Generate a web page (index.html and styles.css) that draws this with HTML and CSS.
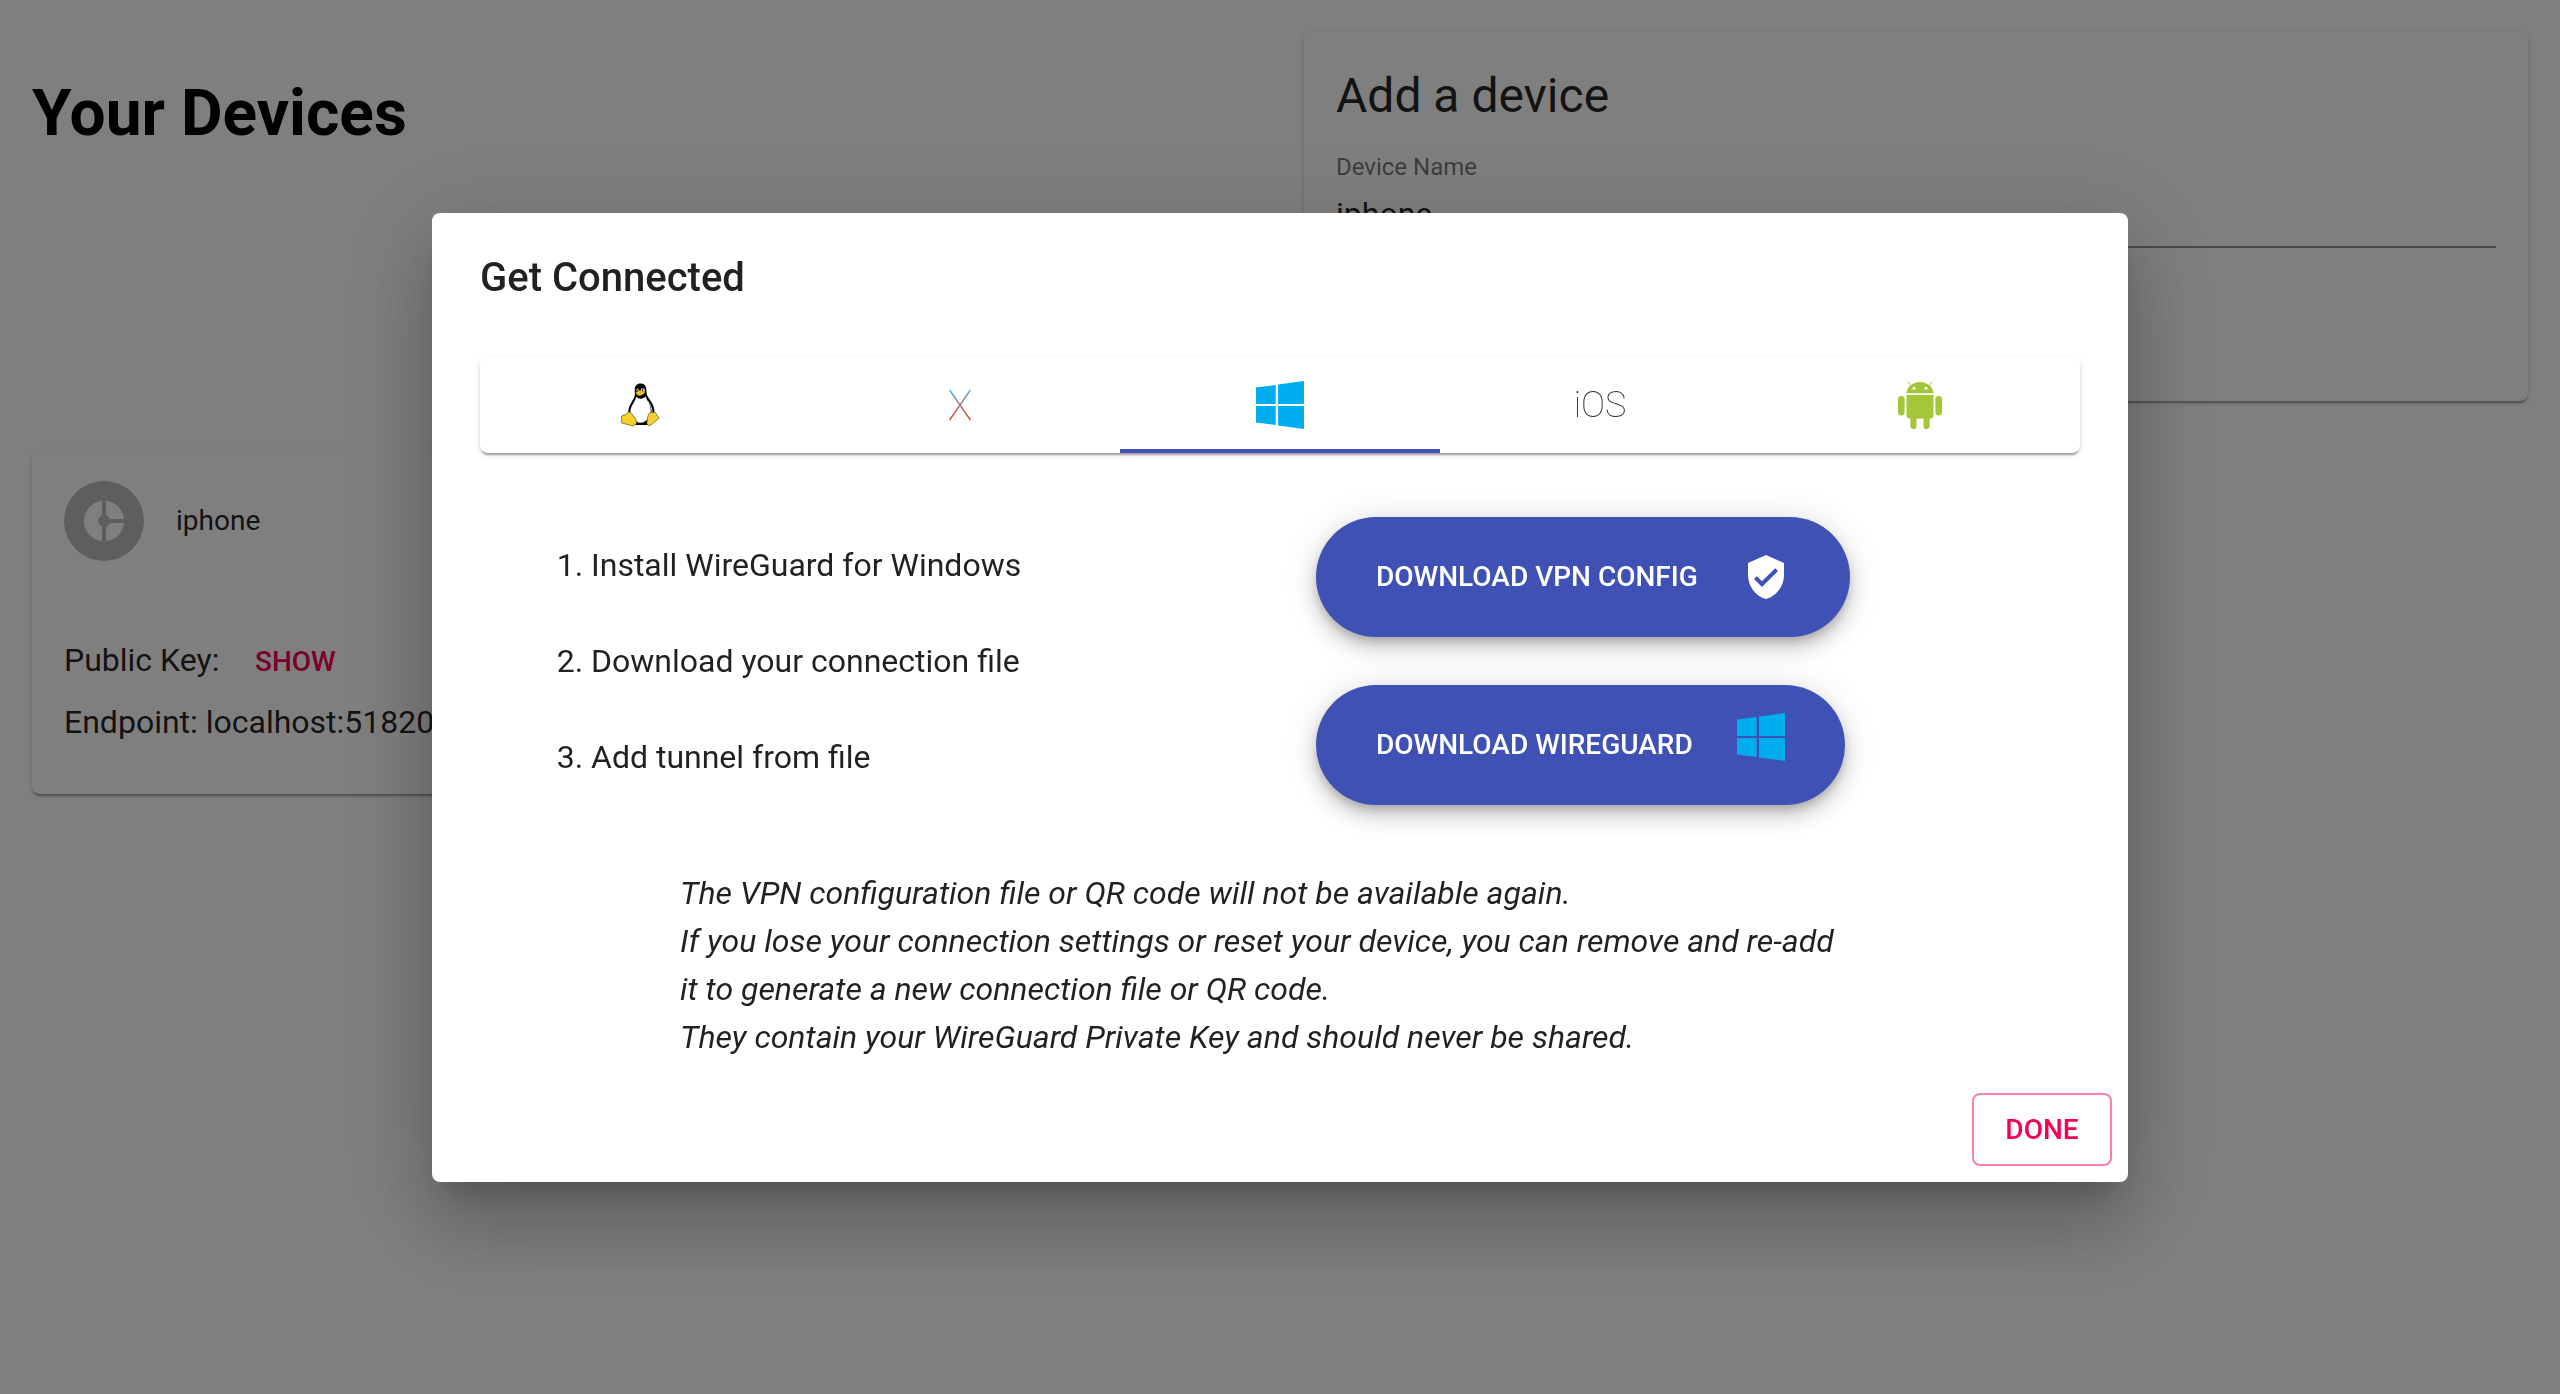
FILE: index.html
```html
<!DOCTYPE html>
<html lang="en">
<head>
  <meta charset="utf-8">
  <title>Your Devices</title>
  <link rel="stylesheet" href="styles.css">
</head>
<body>
  <svg class="sprite" aria-hidden="true">
    <symbol id="windows" viewBox="0 0 48 48">
      <path fill="#00adef" d="M0 6.6 19.7 4v19H0zM22 3.6 48 0v23H22zM0 25h19.7v19L0 41.400zM22 25h26v23l-26-3.600z"/>
    </symbol>
  </svg>

  <main class="page">
    <section class="devices">
      <h1 class="devices-title">Your Devices</h1>
      <article class="card device">
        <header class="device-header">
          <span class="avatar">
            <svg width="48" height="48" viewBox="0 0 24 24" fill="#fff" aria-hidden="true"><path d="M11 9.160V2c-5 .5-9 4.790-9 10s4 9.500 9 10v-7.160c-1-.410-2-1.520-2-2.840s1-2.430 2-2.840zM14.860 11H22c-.480-4.750-4-8.530-9-9v7.160c1 .300 1.520.980 1.860 1.840zM13 14.840V22c5-.470 8.520-4.250 9-9h-7.140c-.340.860-.860 1.540-1.860 1.840z"/></svg>
          </span>
          <span class="device-name">iphone</span>
        </header>
        <div class="device-body">
          <p class="key-row">Public Key: <button type="button" class="text-button">SHOW</button></p>
          <p class="line">Endpoint: localhost:51820</p>
        </div>
      </article>
    </section>

    <section>
      <form class="card add-form">
        <h2 class="add-title">Add a device</h2>
        <div class="field">
          <label for="device-name">Device Name</label>
          <input id="device-name" type="text" value="iphone">
        </div>
      </form>
    </section>
  </main>

  <div class="backdrop">
    <div class="dialog" role="dialog" aria-modal="true" aria-labelledby="dialog-title">
      <h2 class="dialog-title" id="dialog-title">Get Connected</h2>
      <div class="dialog-content">
        <div class="tabs" role="tablist">
          <button type="button" class="tab" role="tab" aria-label="Linux">
            <svg width="48" height="48" viewBox="0 0 48 48" aria-hidden="true">
              <path d="M24.500 2.500c-3.700 0-5.800 2.500-5.700 6.300.1 3.600.4 6-1 8.500-1.600 2.900-4.300 6.600-5.200 10.700-.5 2.600.2 4-.8 6.500L18 44h17l4-8c-1.500-2.500 0-5-1-9-1.100-4.600-3.600-7.500-5.700-10.500-1.900-2.700-1.800-5.200-2-8.200-.3-3.700-2.200-5.800-5.800-5.800z"/>
              <path fill="#fff" d="M20.300 15.500c1.500 1.600 3 2.300 4.500 2.200 1.800-.1 3.500-1.300 4.900-2.500.6 3 4.300 8 5 13 .4 3-.4 5-1.700 7.300-.7 2.500-3.700 6-8.200 6.200-4 .2-6-2.200-7.500-4.500-1.900-2.700-3.300-5-2.900-8 .6-4 4.400-8 5.900-13.700z"/>
              <path fill="none" stroke="#fff" stroke-width=".8" d="M32 20c2 4 4.500 7 4 12"/>
              <path fill="#fff" d="M20.300 9.500c0-1.300.5-2 1.400-2 1 0 1.600.9 1.600 2.300zM24.800 9.700c0-1.600.8-2.500 2.100-2.500s2 .9 2 2.400l-.5 1.500z"/>
              <circle cx="22" cy="9" r=".8"/><circle cx="26.700" cy="8.900" r=".8"/>
              <path fill="#f2c21d" stroke="#604b10" stroke-width=".4" d="M20 11.300c1.500-1.100 2.700-2.100 4-2.100s3 1.200 4.700 1.900c.5.800-.2 1.500-1.100 2-1.300.8-2.300 1.700-3.900 1.700-1.700 0-3-1.500-3.700-2.300-.4-.4-.3-.8 0-1.200z"/>
              <path fill="#f6d12b" stroke="#3f3208" stroke-width=".6" d="M12.300 31c1.700-.5 3 .8 4.300 2.800 1.400 2.200 3.600 4.500 3.900 7 .3 2.800-1.800 4.500-5 3.800-3-.7-5.500-1.700-9.300-2.300-1.200-.5-.5-2.200-.6-3.700-.1-1.600-.8-3.500.7-4.100 2.300-.7 4.200-.8 4.700-2 .3-.8.500-1.200 1.300-1.500zM33.400 32.200c.9-1.300 2.500-.8 4-.7 1.400.1 2-.3 2.500.7.6 1.700 1.300 2.500 2.400 3.600.9.800.4 1.700-.8 2.700-2.100 1.600-4.300 3.300-5.800 4.800-1.300 1.400-3.500 1.700-4.500.1-.7-1.400-.1-3.700.4-6.200.4-1.900.4-3.500 1.800-5z"/>
            </svg>
          </button>
          <button type="button" class="tab" role="tab" aria-label="macOS">
            <svg width="48" height="48" viewBox="0 0 48 48" aria-hidden="true">
              <defs><linearGradient id="mac" gradientUnits="userSpaceOnUse" x1="0" y1="9" x2="0" y2="39"><stop offset="0" stop-color="#43b4ea"/><stop offset=".5" stop-color="#a47a8a"/><stop offset="1" stop-color="#f0442c"/></linearGradient></defs>
              <path fill="none" stroke="url(#mac)" stroke-width="1.500" d="M13.600 9l20.800 30M34.400 9 13.600 39"/>
            </svg>
          </button>
          <button type="button" class="tab selected" role="tab" aria-label="Windows" aria-selected="true">
            <svg width="48" height="48" aria-hidden="true"><use href="#windows"/></svg>
          </button>
          <button type="button" class="tab ios" role="tab">iOS</button>
          <button type="button" class="tab" role="tab" aria-label="Android">
            <svg width="48" height="48" viewBox="0 0 48 48" fill="#a4c639" aria-hidden="true">
              <path d="M10.500 12.300C10.700 6 16.500 1 24 1s13.300 5 13.500 11.300zM10.500 14h27v20.500a3 3 0 0 1-3 3h-21a3 3 0 0 1-3-3z"/>
              <path stroke="#a4c639" stroke-width=".8" stroke-linecap="round" d="m14.200 4-2.500-3.500M33.800 4l2.500-3.500"/>
              <rect x="2" y="15" width="6.600" height="19.500" rx="3.300"/>
              <rect x="39.400" y="15" width="6.600" height="19.500" rx="3.300"/>
              <rect x="14.300" y="30" width="6.200" height="18" rx="3.100"/>
              <rect x="27.500" y="30" width="6.200" height="18" rx="3.100"/>
              <circle cx="18" cy="7.200" r="1.500" fill="#fff"/><circle cx="30" cy="7.200" r="1.500" fill="#fff"/>
            </svg>
          </button>
        </div>

        <div class="setup">
          <ol class="steps">
            <li>Install WireGuard for Windows</li>
            <li>Download your connection file</li>
            <li>Add tunnel from file</li>
          </ol>
          <div class="downloads">
            <button type="button" class="pill">DOWNLOAD VPN CONFIG
              <svg width="48" height="48" viewBox="0 0 24 24" fill="#fff" aria-hidden="true"><path d="M12 1 3 5v6c0 5.550 3.840 10.740 9 12 5.160-1.260 9-6.450 9-12V5l-9-4zm-2 16-4-4 1.410-1.410L10 14.170l6.590-6.590L18 9l-8 8z"/></svg>
            </button>
            <button type="button" class="pill">DOWNLOAD WIREGUARD
              <svg class="raised" width="48" height="48" aria-hidden="true"><use href="#windows"/></svg>
            </button>
          </div>
        </div>

        <p class="notice">
          The VPN configuration file or QR code will not be available again.<br>
          If you lose your connection settings or reset your device, you can remove and re-add<br>
          it to generate a new connection file or QR code.<br>
          They contain your WireGuard Private Key and should never be shared.
        </p>
      </div>
      <div class="actions">
        <button type="button" class="outlined">DONE</button>
      </div>
    </div>
  </div>
</body>
</html>
```

FILE: styles.css
```css
* {
  box-sizing: border-box;
}

body {
  margin: 0;
  background: #fff;
  color: rgba(0, 0, 0, 0.87);
  font-family: Roboto, "Liberation Sans", sans-serif;
  font-size: 32px;
  line-height: 48px;
}

h1, h2, p, ol {
  margin: 0;
}

button, input {
  font-family: inherit;
  color: inherit;
}

button {
  border: 0;
  background: none;
  cursor: pointer;
}

svg {
  display: block;
  flex: none;
}

.sprite {
  position: absolute;
  width: 0;
  height: 0;
}

/* Page behind the dialog */

.page {
  display: grid;
  grid-template-columns: 1fr 1fr;
  gap: 48px;
  padding: 32px;
}

.card {
  border-radius: 8px;
  background: #fff;
  box-shadow: 0 4px 2px -2px rgba(0, 0, 0, 0.2), 0 2px 2px rgba(0, 0, 0, 0.14), 0 2px 6px rgba(0, 0, 0, 0.12);
}

.devices {
  display: flex;
  flex-direction: column;
  gap: 297px;
}

.devices-title {
  padding-top: 44px;
  color: #000;
  font-size: 64px;
  font-weight: 700;
  line-height: 76px;
}

.device-header {
  display: flex;
  align-items: center;
  gap: 32px;
  padding: 32px;
}

.avatar {
  display: flex;
  align-items: center;
  justify-content: center;
  width: 80px;
  height: 80px;
  border-radius: 50%;
  background: #bdbdbd;
}

.device-name {
  font-size: 28px;
  line-height: 40px;
}

.device-body {
  padding: 32px 32px 48px;
}

.key-row {
  display: flex;
  align-items: baseline;
  gap: 12px;
}

.text-button {
  min-width: 128px;
  padding: 12px 16px;
  color: #f50057;
  font-size: 28px;
  font-weight: 500;
  line-height: 49px;
}

.add-form {
  padding: 32px 32px 153px;
}

.add-title {
  font-size: 48px;
  font-weight: 400;
  line-height: 64px;
}

.field {
  display: flex;
  flex-direction: column;
  gap: 4px;
  padding-top: 27px;
}

.field label {
  color: rgba(0, 0, 0, 0.54);
  font-size: 24px;
  line-height: 24px;
}

.field input {
  width: 100%;
  height: 65px;
  padding: 12px 0 14px;
  border: 0;
  border-bottom: 2px solid rgba(0, 0, 0, 0.42);
  outline: 0;
  background: none;
  font-size: 32px;
}

/* Dialog */

.backdrop {
  position: fixed;
  inset: 0;
  display: flex;
  align-items: center;
  justify-content: center;
  padding: 64px;
  background: rgba(0, 0, 0, 0.5);
}

.dialog {
  width: 100%;
  max-width: 1696px;
  border-radius: 8px;
  background: #fff;
  box-shadow: 0 22px 30px -14px rgba(0, 0, 0, 0.2), 0 48px 76px 6px rgba(0, 0, 0, 0.14), 0 18px 92px 16px rgba(0, 0, 0, 0.12);
}

.dialog-title {
  padding: 33px 48px 31px;
  font-size: 40px;
  font-weight: 500;
  line-height: 64px;
}

.dialog-content {
  display: flex;
  flex-direction: column;
  gap: 64px;
  padding: 16px 48px;
}

.tabs {
  display: grid;
  grid-template-columns: repeat(5, 1fr);
  border-radius: 8px;
  box-shadow: 0 4px 2px -2px rgba(0, 0, 0, 0.2), 0 2px 2px rgba(0, 0, 0, 0.14), 0 2px 6px rgba(0, 0, 0, 0.12);
}

.tab {
  display: flex;
  align-items: center;
  justify-content: center;
  height: 96px;
  padding: 0;
}

.selected {
  box-shadow: inset 0 -4px #3f51b5;
}

.ios {
  color: #333;
  font-size: 36px;
  font-weight: 100;
}

.setup {
  display: grid;
  grid-template-columns: 1fr 1fr;
}

.steps {
  padding-left: 111px;
}

.steps li {
  padding: 24px 0;
}

.downloads {
  display: flex;
  flex-direction: column;
  align-items: flex-start;
  gap: 48px;
  padding-left: 36px;
}

.pill {
  display: flex;
  align-items: center;
  gap: 44px;
  height: 120px;
  padding: 0 60px;
  border-radius: 60px;
  background: #3f51b5;
  color: #fff;
  font-size: 28px;
  font-weight: 500;
  white-space: nowrap;
  box-shadow: 0 6px 10px -2px rgba(0, 0, 0, 0.2), 0 12px 20px rgba(0, 0, 0, 0.14), 0 2px 36px rgba(0, 0, 0, 0.12);
}

.raised {
  margin-bottom: 16px;
}

.notice {
  align-self: center;
  width: 75%;
  font-style: italic;
}

.actions {
  display: flex;
  justify-content: flex-end;
  padding: 16px;
}

.outlined {
  min-width: 140px;
  padding: 10px 30px;
  border: 2px solid rgba(245, 0, 87, 0.5);
  border-radius: 8px;
  color: #f50057;
  font-size: 28px;
  font-weight: 500;
  line-height: 49px;
}
```
